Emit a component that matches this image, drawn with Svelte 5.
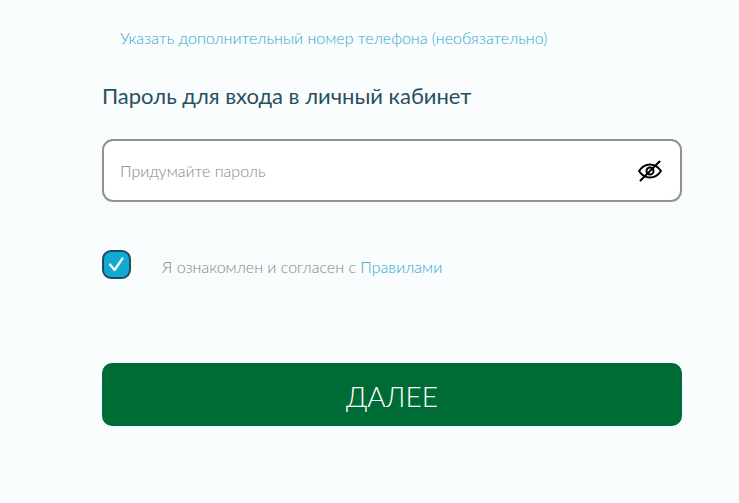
<script lang="ts">
  let password: string = $state("");
  let visible: boolean = $state(false);
  let agreed: boolean = $state(true);

  function submit(e: Event) {
    e.preventDefault();
  }
</script>

<form class="form" onsubmit={submit}>
  <a class="extra-phone" href="#phone">Указать дополнительный номер телефона (необязательно)</a>

  <label class="title" for="password">Пароль для входа в личный кабинет</label>
  <div class="field">
    <input
      id="password"
      type={visible ? "text" : "password"}
      placeholder="Придумайте пароль"
      bind:value={password}
    />
    <button
      class="eye"
      type="button"
      aria-label="Показать пароль"
      onclick={() => (visible = !visible)}
    >
      <svg viewBox="0 0 26 24" width="26" height="24" fill="none" stroke="#000" stroke-width="2">
        <path d="M2 12C5 7.500 9 5.500 13 5.500S21 7.500 24 12C21 16.500 17 18.500 13 18.500S5 16.500 2 12Z" stroke-linejoin="round" />
        <circle cx="13" cy="12" r="3.500" />
        {#if !visible}
          <path d="M3.500 21.500L22.500 2.500" stroke-linecap="round" />
        {/if}
      </svg>
    </button>
  </div>

  <div class="agree">
    <span class="check">
      <input id="agree" type="checkbox" bind:checked={agreed} />
      {#if agreed}
        <svg viewBox="0 0 29 29" width="29" height="29" fill="none" stroke="#fff" stroke-width="2.200">
          <path d="M8 14.500L12.500 20L20.500 8.500" stroke-linecap="round" stroke-linejoin="round" />
        </svg>
      {/if}
    </span>
    <label for="agree">Я ознакомлен и согласен с <a href="#rules">Правилами</a></label>
  </div>

  <button class="next" type="submit">ДАЛЕЕ</button>
</form>

<style>
  :global(body) {
    background: #fafdfe;
  }

  .form {
    display: flex;
    flex-direction: column;
    padding: 26px 57px 77px 102px;
    font-family: Lato, "Open Sans", sans-serif;
    font-weight: 300;
    font-size: 16px;
    line-height: 24px;
    color: #858585;
  }

  a {
    color: #2fa6d0;
    text-decoration: none;
  }

  .extra-phone {
    align-self: flex-start;
    padding-left: 18px;
  }

  .title {
    margin-top: 30px;
    font-size: 22px;
    line-height: 32px;
    font-weight: 400;
    color: #26505f;
  }

  /* ---- Password ---- */
  .field {
    display: flex;
    align-items: center;
    box-sizing: border-box;
    height: 63px;
    margin-top: 27px;
    padding: 0 17px 0 16px;
    background: #fff;
    border: 2px solid #929292;
    border-radius: 11px;
  }

  .field input {
    flex: 1;
    min-width: 0;
    padding: 0;
    border: none;
    outline: none;
    background: none;
    font: inherit;
    color: #26505f;
  }

  .field input::placeholder {
    color: #858585;
    opacity: 1;
  }

  .eye {
    display: flex;
    padding: 0;
    border: none;
    background: none;
    cursor: pointer;
  }

  /* ---- Agreement ---- */
  .agree {
    display: flex;
    align-items: flex-end;
    gap: 31px;
    margin-top: 48px;
  }

  .check {
    display: grid;
    width: 29px;
    height: 29px;
  }

  .check input,
  .check svg {
    grid-area: 1 / 1;
  }

  .check svg {
    pointer-events: none;
  }

  .check input {
    appearance: none;
    box-sizing: border-box;
    width: 29px;
    height: 29px;
    margin: 0;
    border: 2px solid #1b4f5f;
    border-radius: 9px;
    background: #fff;
    cursor: pointer;
  }

  .check input:checked {
    background: #12a9d2;
  }

  .next {
    height: 63px;
    margin-top: 84px;
    padding: 2px 0 0;
    border: none;
    border-radius: 10px;
    background: #006c35;
    color: #fff;
    font: inherit;
    font-size: 28px;
    cursor: pointer;
  }
</style>
